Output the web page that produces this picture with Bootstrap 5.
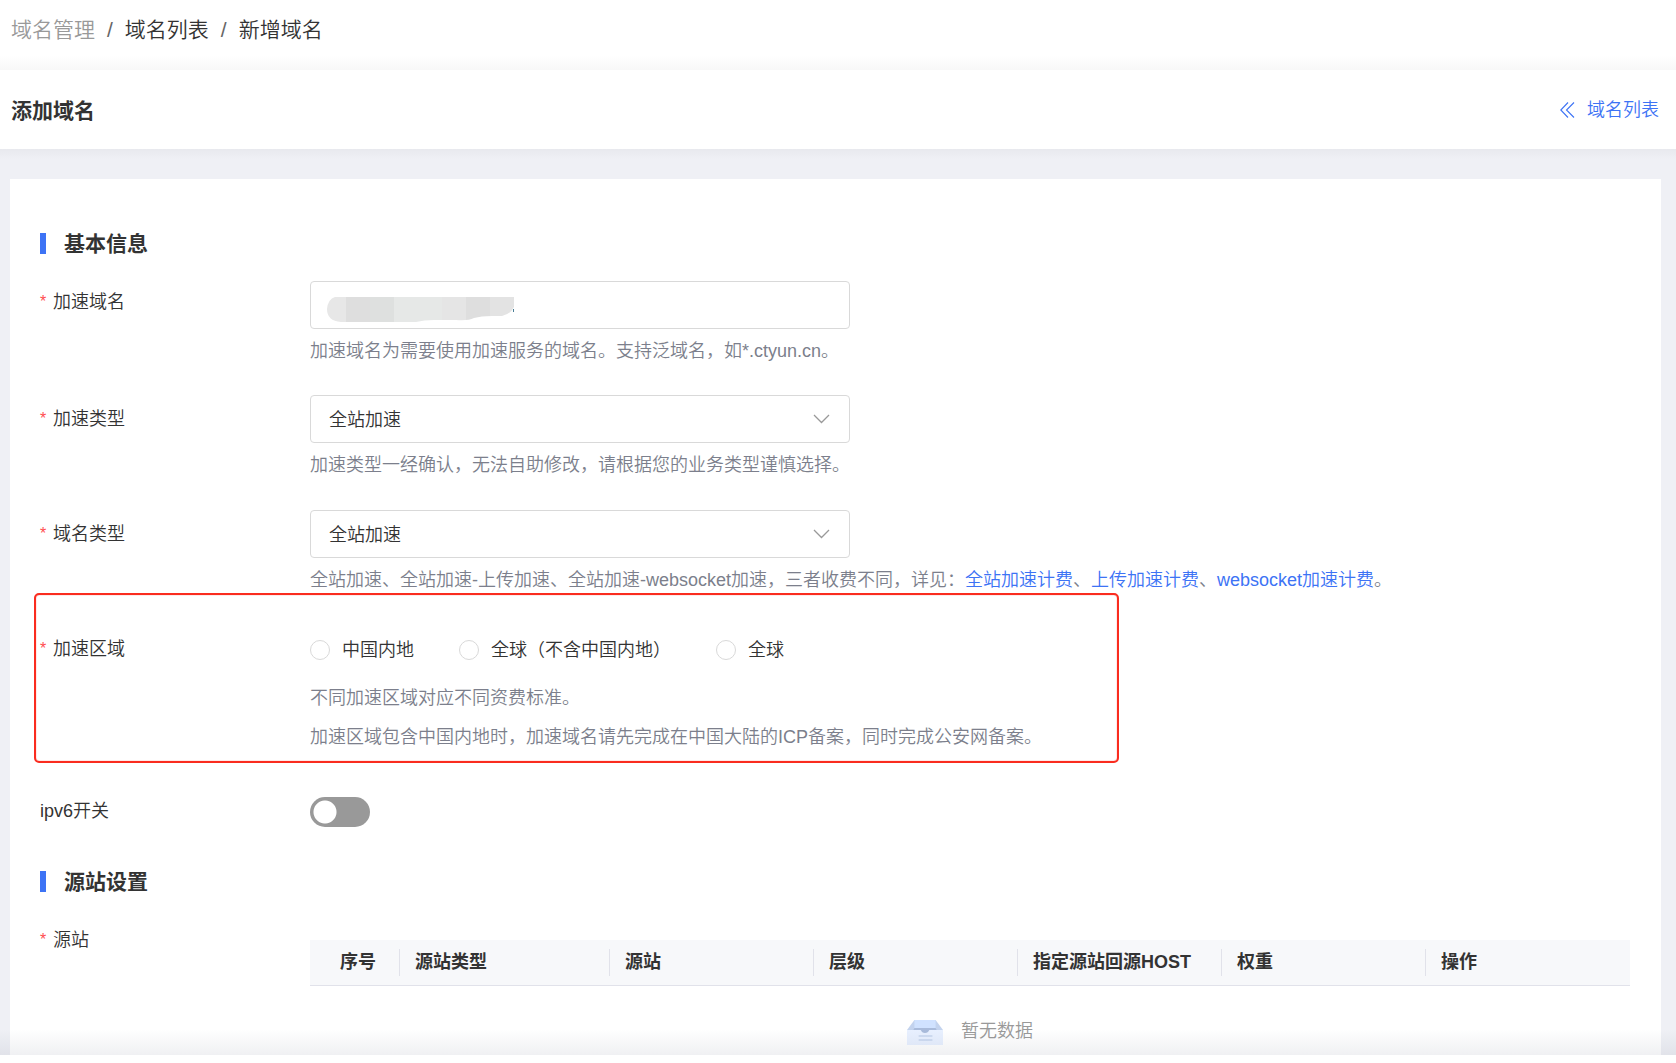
<!DOCTYPE html>
<html lang="zh-CN">
<head>
<meta charset="utf-8">
<meta name="viewport" content="width=device-width, initial-scale=1">
<title>新增域名</title>
<link href="https://cdn.jsdelivr.net/npm/bootstrap@5.3.0/dist/css/bootstrap.min.css" rel="stylesheet">
<style>
  :root { --ink: #333; --muted: #7c7f8c; --brand: #3d73f5; --line: #d9d9d9; --thin: 350; }
  body { font-family: "Liberation Sans", "Noto Sans CJK SC", sans-serif; font-size: 18px; line-height: 26px; color: var(--ink); background: #fff; padding-bottom: 8px; }
  a { color: var(--brand); text-decoration: none; }

  .crumb-bar { height: 70px; padding: 0 11px 10px; background: linear-gradient(to top, #f8f8f8, #fff 14px); }
  .crumb-bar .breadcrumb { font-size: 21px; font-weight: var(--thin); --bs-breadcrumb-item-padding-x: 12px; --bs-breadcrumb-divider-color: #666; }
  .crumb-bar .breadcrumb-item, .crumb-bar .breadcrumb-item a { color: var(--ink); }
  .crumb-bar .breadcrumb-item:first-child a { color: #999; }

  .title-bar { height: 79px; padding: 1px 17px 0 11px; }
  .title-bar a { font-weight: var(--thin); }
  .title-bar h1, .section-title { font-size: 21px; line-height: 31px; font-weight: 700; }

  .page-body { background: linear-gradient(#e8e9ee, #eff0f5 10px); padding: 30px 15px 0 10px; }
  .page-body::after { content: ""; position: absolute; left: 0; right: 0; bottom: 0; height: 26px; pointer-events: none; background: linear-gradient(to top, rgba(60, 70, 100, .08), rgba(60, 70, 100, 0)); }
  .panel { padding: 49px 31px 0 30px; }

  .section-title { display: flex; align-items: center; gap: 18px; margin-bottom: 19px; }
  .section-title::before { content: ""; width: 6px; height: 21px; background: var(--brand); }
  .section-next { margin-top: 31px; }

  .form-line { display: flex; font-weight: var(--thin); margin-bottom: 23px; }
  .form-line:first-of-type { margin-bottom: 22px; }
  .line-label { flex: 0 0 270px; height: 48px; line-height: 48px; }
  .required::before { content: "*"; display: inline-block; width: 13px; color: #ff4d4f; font-size: 16px; line-height: 20px; vertical-align: 1px; }
  .field { max-width: 540px; }
  .field-lead { padding-top: 3px; }
  .field .form-control, .field .form-select { height: 48px; padding: 2px 18px 0; font-size: 18px; font-weight: var(--thin); color: var(--ink); border: 1px solid var(--line); border-radius: 4px; background: #fff; }
  .field .caret { position: absolute; right: 20px; top: 19px; pointer-events: none; }
  .field .masked { position: absolute; left: 16px; top: 15px; pointer-events: none; }
  .hint { color: var(--muted); line-height: 44px; margin: 0; }
  .region-hints { padding: 4px 0 7px; }
  .region-hints .hint { line-height: 39px; }

  .region-frame { position: absolute; left: -6px; top: -32px; bottom: 1px; width: 1085px; max-width: calc(100% + 12px); border: 2px solid #fa2c1f; border-radius: 5px; box-shadow: inset 0 0 1px #fa2c1f; pointer-events: none; }
  .region-options { height: 50px; }
  .region-options .form-check-input { width: 20px; height: 20px; margin: 0; border: 1px solid var(--line); float: none; }
  .region-options label { margin: 0 45px 0 12px; }

  .big-switch .form-check-input { width: 60px; height: 30px; margin: 2px 0 0; border: 0; background: #999 radial-gradient(circle at 15px 15px, #fff 11px, #999 12px); }

  .origin-table { table-layout: fixed; margin: 24px 0 0; color: var(--ink); }
  .origin-table th { position: relative; height: 45px; padding: 0 0 0 15px; vertical-align: middle; background: #f7f8fa; border-bottom: 1px solid #e1e2ea; font-weight: 700; white-space: nowrap; }
  .origin-table th:first-child { width: 90px; padding-left: 30px; }
  .origin-table th:nth-child(2) { width: 210px; }
  .origin-table th:not(:last-child)::after { content: ""; position: absolute; right: 0; top: 9px; bottom: 9px; width: 1px; background: #e1e2ea; }
  .origin-table td { padding: 23px 0 0; border: 0; background: transparent; color: #999; font-weight: var(--thin); }
  .empty-note { height: 44px; gap: 18px; }
  .empty-note svg { margin-top: 3px; }
</style>
<script src="https://cdn.jsdelivr.net/npm/bootstrap@5.3.0/dist/js/bootstrap.bundle.min.js" defer></script>
</head>
<body class="d-flex flex-column min-vh-100">

<nav class="crumb-bar d-flex align-items-center" aria-label="breadcrumb">
  <ol class="breadcrumb mb-0">
    <li class="breadcrumb-item"><a href="#">域名管理</a></li>
    <li class="breadcrumb-item"><a href="#">域名列表</a></li>
    <li class="breadcrumb-item active" aria-current="page">新增域名</li>
  </ol>
</nav>

<header class="title-bar bg-white d-flex align-items-center justify-content-between">
  <h1 class="mb-0">添加域名</h1>
  <a href="#" class="d-flex align-items-center">
    <svg class="me-2" width="19" height="18" viewBox="0 0 19 18" fill="none" stroke="currentColor" stroke-width="1.1"><path d="M8 1.500.8 9 8 16.500M14 1.500 6.500 9l7.500 7.500"/></svg>
    域名列表
  </a>
</header>

<main class="page-body position-relative flex-grow-1 d-flex flex-column">
  <form class="panel bg-white flex-grow-1">
    <h2 class="section-title">基本信息</h2>

    <div class="form-line">
      <label class="line-label required" for="domain">加速域名</label>
      <div class="flex-grow-1 field-lead">
        <div class="field position-relative">
          <input id="domain" type="text" class="form-control">
          <svg class="masked" width="190" height="30" viewBox="0 0 190 30" aria-hidden="true">
            <clipPath id="smudge"><path d="M9 1H188V11Q185 18 176 20H166Q155 20 148 22Q142 25 130 24H108Q98 24 90 26H15Q1 25 1 13Q2 3 9 1Z"/></clipPath>
            <g clip-path="url(#smudge)">
              <path fill="#e7e7e7" d="M0 0h20v28H0z"/><path fill="#dedede" d="M20 0h24v28H20z"/><path fill="#dee0df" d="M44 0h24v28H44z"/>
              <path fill="#e6e8e7" d="M68 0h48v28H68z"/><path fill="#e5e5e5" d="M116 0h24v28h-24z"/><path fill="#dedede" d="M140 0h24v28h-24z"/><path fill="#e3e3e3" d="M164 0h26v28h-26z"/>
            </g>
            <path fill="#4a7f96" d="M187 13h1v3h-1z"/>
          </svg>
        </div>
        <p class="hint">加速域名为需要使用加速服务的域名。支持泛域名，如*.ctyun.cn。</p>
      </div>
    </div>

    <div class="form-line">
      <label class="line-label required" for="accel-type">加速类型</label>
      <div class="flex-grow-1">
        <div class="field position-relative">
          <select id="accel-type" class="form-select"><option>全站加速</option></select>
          <svg class="caret" width="17" height="10" viewBox="0 0 17 10" fill="none" stroke="#999" stroke-width="1.3"><path d="m1 1 7.500 7.500L16 1"/></svg>
        </div>
        <p class="hint">加速类型一经确认，无法自助修改，请根据您的业务类型谨慎选择。</p>
      </div>
    </div>

    <div class="form-line">
      <label class="line-label required" for="domain-type">域名类型</label>
      <div class="flex-grow-1">
        <div class="field position-relative">
          <select id="domain-type" class="form-select"><option>全站加速</option></select>
          <svg class="caret" width="17" height="10" viewBox="0 0 17 10" fill="none" stroke="#999" stroke-width="1.3"><path d="m1 1 7.500 7.500L16 1"/></svg>
        </div>
        <p class="hint">全站加速、全站加速-上传加速、全站加速-websocket加速，三者收费不同，详见：<a href="#">全站加速计费</a>、<a href="#">上传加速计费</a>、<a href="#">websocket加速计费</a>。</p>
      </div>
    </div>

    <div class="form-line position-relative" role="radiogroup" aria-labelledby="region-label">
      <div class="line-label required" id="region-label">加速区域</div>
      <div class="flex-grow-1">
        <div class="region-options d-flex align-items-center">
          <input class="form-check-input" type="radio" name="region" id="region-cn"><label for="region-cn">中国内地</label>
          <input class="form-check-input" type="radio" name="region" id="region-out"><label for="region-out">全球（不含中国内地）</label>
          <input class="form-check-input" type="radio" name="region" id="region-all"><label for="region-all">全球</label>
        </div>
        <div class="region-hints">
          <p class="hint">不同加速区域对应不同资费标准。</p>
          <p class="hint">加速区域包含中国内地时，加速域名请先完成在中国大陆的ICP备案，同时完成公安网备案。</p>
        </div>
      </div>
      <div class="region-frame"></div>
    </div>

    <div class="form-line mb-0">
      <label class="line-label" for="ipv6">ipv6开关</label>
      <div class="form-switch big-switch d-flex align-items-center p-0">
        <input class="form-check-input" type="checkbox" role="switch" id="ipv6">
      </div>
    </div>

    <h2 class="section-title section-next">源站设置</h2>

    <div class="form-line mb-0">
      <div class="line-label required" id="origin-label">源站</div>
      <div class="flex-grow-1">
        <table class="table origin-table" aria-labelledby="origin-label">
          <thead>
            <tr><th>序号</th><th>源站类型</th><th>源站</th><th>层级</th><th>指定源站回源HOST</th><th>权重</th><th>操作</th></tr>
          </thead>
          <tbody>
            <tr><td colspan="7">
              <div class="empty-note d-flex align-items-center justify-content-center">
                <svg width="36" height="25" viewBox="0 0 34 25" preserveAspectRatio="none" aria-hidden="true">
                  <path fill="#c3d3ee" d="M7 0h20l7 10H0z"/>
                  <path fill="#d0e2ff" d="M7 0h20v8H7z"/>
                  <path fill="#a9bbdb" d="M7 8h20l1 2H6z"/>
                  <path fill="#e8f0ff" d="M0 10h34v15H0z"/>
                  <path fill="#a9bbdb" d="M13 10h8q-1 3-4 3t-4-3z"/>
                  <path fill="#cfdcf2" d="M11 15h13v2H11zM11 19h13v2H11z"/>
                </svg>
                <span>暂无数据</span>
              </div>
            </td></tr>
          </tbody>
        </table>
      </div>
    </div>
  </form>
</main>
</body>
</html>
